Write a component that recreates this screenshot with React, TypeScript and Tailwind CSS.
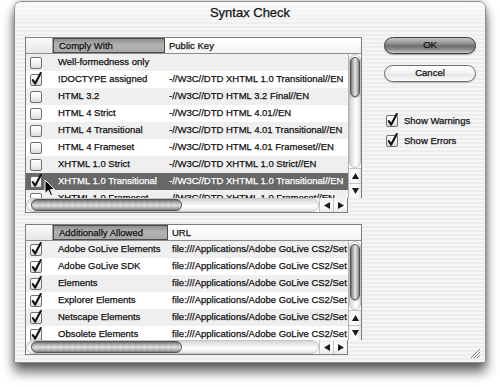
import React from 'react';

const stripes =
  'bg-[repeating-linear-gradient(to_bottom,#ededed_0px,#ededed_2px,#f5f5f5_2px,#f5f5f5_4px)]';

function Check({ checked }: { checked?: boolean }) {
  return (
    <div className="relative h-[12px] w-[12px] shrink-0 rounded-[2px] border border-[#6f6f6f] bg-[linear-gradient(to_bottom,#ffffff,#f2f2f2_50%,#dadada)] shadow-[inset_0_1px_0_#fff]">
      {checked && (
        <svg width="13" height="16" viewBox="0 0 13 16" className="absolute left-[-1px] top-[-5px]">
          <path d="M2.8 10.2 L5.2 13.6 L10.8 3" stroke="#111" strokeWidth="2.1" fill="none" strokeLinecap="round" strokeLinejoin="round" />
        </svg>
      )}
    </div>
  );
}

function Triangle({ dir }: { dir: 'up' | 'down' | 'left' | 'right' }) {
  const d = {
    up: 'M0 6 L3.5 0 L7 6 Z',
    down: 'M0 0 L7 0 L3.5 6 Z',
    left: 'M6 0 L6 7 L0 3.5 Z',
    right: 'M0 0 L0 7 L6 3.5 Z',
  }[dir];
  const vertical = dir === 'up' || dir === 'down';
  return (
    <svg width={vertical ? 7 : 6} height={vertical ? 6 : 7} viewBox={vertical ? '0 0 7 6' : '0 0 6 7'}>
      <path d={d} fill="#1a1a1a" />
    </svg>
  );
}

type Row = { name: string; value: string; checked: boolean; selected?: boolean };

function ListTable({
  col1,
  col2,
  col1Width,
  rows,
  bodyHeight,
  troughHeight,
  thumbHeight,
}: {
  col1: string;
  col2: string;
  col1Width: string;
  rows: Row[];
  bodyHeight: string;
  troughHeight: string;
  thumbHeight: string;
}) {
  return (
    <div className="flex flex-col">
      <div className="w-[337px] border border-b-0 border-[#7d7d7d] bg-white">
        {/* header */}
        <div className="flex h-[16px] border-b border-[#8c8c8c] text-[9.5px] leading-[15px] text-[#111]">
          <div className="w-[27px] shrink-0 border-r border-[#a4a4a4] bg-[linear-gradient(to_bottom,#fafafa,#e6e6e6)]" />
          <div className={`${col1Width} shrink-0 border border-[#4d4d4d] bg-[linear-gradient(to_bottom,#8e8e8e,#b4b4b4_45%,#a9a9a9)] pl-[5px] leading-[14px]`}>
            {col1}
          </div>
          <div className="flex-1 bg-[linear-gradient(to_bottom,#ffffff,#f3f3f3)] pl-[4px]">{col2}</div>
        </div>
        {/* body */}
        <div className={`flex ${bodyHeight}`}>
          <div className="w-[322px] shrink-0 overflow-hidden">
            {rows.map((r, i) => (
              <div
                key={r.name}
                className={`flex h-[17px] items-center whitespace-nowrap text-[9.5px] ${
                  r.selected ? 'bg-[#686868] text-white' : i % 2 === 0 ? 'bg-[#efefef] text-[#111]' : 'bg-white text-[#111]'
                }`}
              >
                <div className="flex w-[27px] shrink-0 pl-[4px]">
                  <Check checked={r.checked} />
                </div>
                <div className={`${col1Width} shrink-0 pl-[5px]`}>{r.name}</div>
                <div className="shrink-0 pl-[4px]">{r.value}</div>
              </div>
            ))}
          </div>
          {/* vertical scrollbar */}
          <div className="flex w-[14px] flex-col border-l border-[#b4b4b4] bg-white">
            <div className={`${troughHeight} rounded-full border border-[#c4c4c4] bg-[linear-gradient(to_right,#d6d6d6,#f4f4f4_45%,#ffffff_60%,#e2e2e2)] pt-[2px]`}>
              <div className={`${thumbHeight} rounded-full border border-[#555] bg-[linear-gradient(to_right,#6f6f6f,#bdbdbd_30%,#e2e2e2_55%,#a9a9a9_85%,#7b7b7b)] shadow-[0_1px_1px_rgba(0,0,0,0.3)]`} />
            </div>
            <div className="flex h-[15px] items-center justify-center border-t border-[#c4c4c4] bg-[linear-gradient(to_right,#f0f0f0,#ffffff,#e8e8e8)]">
              <Triangle dir="up" />
            </div>
            <div className="flex h-[15px] items-center justify-center border-t border-[#c4c4c4] bg-[linear-gradient(to_right,#f0f0f0,#ffffff,#e8e8e8)]">
              <Triangle dir="down" />
            </div>
          </div>
        </div>
      </div>
      {/* horizontal scrollbar */}
      <div className="flex h-[15px] w-[323px] border border-t-0 border-[#7d7d7d] bg-white">
        <div className="flex-1 rounded-full border border-[#c4c4c4] bg-[linear-gradient(to_bottom,#d6d6d6,#f4f4f4_45%,#ffffff_60%,#e2e2e2)] pl-[4px]">
          <div className="h-full w-[151px] rounded-full border border-[#555] bg-[repeating-linear-gradient(to_right,rgba(0,0,0,0.04)_0px,rgba(0,0,0,0.04)_3px,transparent_3px,transparent_6px),linear-gradient(to_bottom,#6f6f6f,#bdbdbd_30%,#e2e2e2_55%,#a9a9a9_85%,#7b7b7b)]" />
        </div>
        <div className="flex w-[14px] items-center justify-center border-l border-[#c4c4c4] bg-[linear-gradient(to_bottom,#f0f0f0,#ffffff,#e8e8e8)]">
          <Triangle dir="left" />
        </div>
        <div className="flex w-[14px] items-center justify-center border-l border-[#c4c4c4] bg-[linear-gradient(to_bottom,#f0f0f0,#ffffff,#e8e8e8)]">
          <Triangle dir="right" />
        </div>
      </div>
    </div>
  );
}

const pk = '-//W3C//DTD ';
const complyRows: Row[] = [
  { name: 'Well-formedness only', value: '', checked: false },
  { name: '!DOCTYPE assigned', value: pk + 'XHTML 1.0 Transitional//EN', checked: true },
  { name: 'HTML 3.2', value: pk + 'HTML 3.2 Final//EN', checked: false },
  { name: 'HTML 4 Strict', value: pk + 'HTML 4.01//EN', checked: false },
  { name: 'HTML 4 Transitional', value: pk + 'HTML 4.01 Transitional//EN', checked: false },
  { name: 'HTML 4 Frameset', value: pk + 'HTML 4.01 Frameset//EN', checked: false },
  { name: 'XHTML 1.0 Strict', value: pk + 'XHTML 1.0 Strict//EN', checked: false },
  { name: 'XHTML 1.0 Transitional', value: pk + 'XHTML 1.0 Transitional//EN', checked: true, selected: true },
  { name: 'XHTML 1.0 Frameset', value: pk + 'XHTML 1.0 Frameset//EN', checked: false },
];

const url = 'file:///Applications/Adobe GoLive CS2/Set';
const allowedRows: Row[] = [
  'Adobe GoLive Elements',
  'Adobe GoLive SDK',
  'Elements',
  'Explorer Elements',
  'Netscape Elements',
  'Obsolete Elements',
].map((name) => ({ name, value: url, checked: true }));

export default function App() {
  return (
    <div className="relative h-[387px] w-[500px] overflow-hidden bg-white pl-[14px] pt-[1px] font-['Liberation_Sans',Arial,sans-serif] [-webkit-text-stroke:0.25px_currentColor]">
      <div className={`relative flex h-[362px] w-[472px] flex-col rounded-t-[7px] border border-[#8f8f8f] ${stripes} shadow-[0_9px_12px_rgba(0,0,0,0.6),0_0_6px_rgba(0,0,0,0.25)]`}>
        {/* title bar */}
        <div className="flex h-[22px] items-center justify-center rounded-t-[6px] bg-[linear-gradient(to_bottom,rgba(255,255,255,0.7),rgba(255,255,255,0))] text-[13px] text-[#111]">
          Syntax Check
        </div>

        <div className="flex pl-[10px] pt-[13px]">
          {/* lists */}
          <div className="flex flex-col">
            <ListTable
              col1="Comply With"
              col2="Public Key"
              col1Width="w-[112px]"
              rows={complyRows}
              bodyHeight="h-[144px]"
              troughHeight="h-[114px]"
              thumbHeight="h-[40px]"
            />
            <div className="mt-[11px]">
              <ListTable
                col1="Additionally Allowed"
                col2="URL"
                col1Width="w-[115px]"
                rows={allowedRows}
                bodyHeight="h-[99px]"
                troughHeight="h-[69px]"
                thumbHeight="h-[56px]"
              />
            </div>
          </div>

          {/* buttons and options */}
          <div className="ml-[22px] flex w-[92px] flex-col text-[9.5px] text-[#111]">
            <button className="flex h-[17px] items-center justify-center rounded-full border border-[#3c3c3c] bg-[linear-gradient(to_bottom,#c4c4c4,#8d8d8d_40%,#6c6c6c_52%,#8a8a8a_75%,#c9c9c9)] shadow-[0_1px_1px_rgba(0,0,0,0.3)]">
              OK
            </button>
            <button className="mt-[11px] flex h-[17px] items-center justify-center rounded-full border border-[#6b6b6b] bg-[linear-gradient(to_bottom,#ffffff,#f3f3f3_45%,#e6e6e6_55%,#fbfbfb)] shadow-[0_1px_1px_rgba(0,0,0,0.2)]">
              Cancel
            </button>
            <div className="mt-[32px] flex items-center gap-[6px] pl-[2px]">
              <Check checked />
              <span>Show Warnings</span>
            </div>
            <div className="mt-[6px] flex items-center gap-[6px] pl-[2px]">
              <Check checked />
              <span>Show Errors</span>
            </div>
          </div>
        </div>

        {/* resize grip */}
        <svg width="12" height="12" viewBox="0 0 12 12" className="absolute bottom-[3px] right-[4px]">
          <path d="M11 2 L2 11 M11 5 L5 11 M11 8 L8 11" stroke="#7a7a7a" strokeWidth="1" />
          <path d="M11 3 L3 11 M11 6 L6 11 M11 9 L9 11" stroke="#ffffff" strokeWidth="1" />
        </svg>
      </div>

      {/* mouse pointer */}
      <svg width="12" height="18" viewBox="0 0 12 18" className="absolute left-[44px] top-[179px]">
        <path d="M1 1 L1 14.5 L4.3 11.4 L6.6 16.6 L8.6 15.7 L6.4 10.6 L10.8 10.6 Z" fill="#000" stroke="#fff" strokeWidth="1" strokeLinejoin="round" />
      </svg>
    </div>
  );
}
